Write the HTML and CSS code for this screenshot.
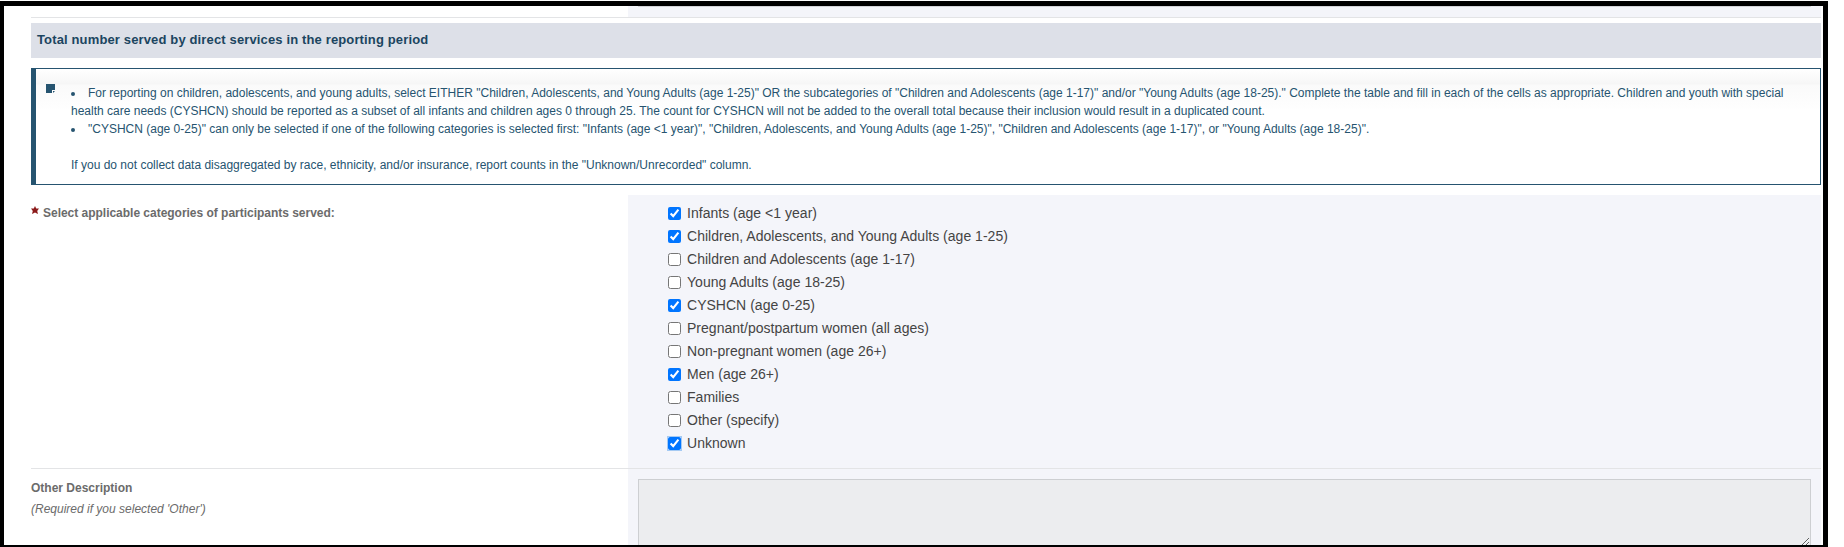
FILE: index.html
```html
<!DOCTYPE html>
<html lang="en">
<head>
<meta charset="utf-8">
<title>Direct Services</title>
<link rel="stylesheet" href="styles.css">
</head>
<body>
<main class="frame">
  <div class="row row-previous">
    <div class="label-cell"></div>
    <div class="field-cell"><div class="previous-field"></div></div>
  </div>
  <h2 class="section-title">Total number served by direct services in the reporting period</h2>
  <section class="note">
    <svg class="note-icon" width="9" height="9" viewBox="0 0 9 9"><path d="M0 0h9v6H6v3H0z" fill="#265470"/><path d="M7 7h2L7 9z" fill="#265470"/></svg>
    <div class="note-text">
      <p class="bullet">For reporting on children, adolescents, and young adults, select EITHER "Children, Adolescents, and Young Adults (age 1-25)" OR the subcategories of "Children and Adolescents (age 1-17)" and/or "Young Adults (age 18-25)." Complete the table and fill in each of the cells as appropriate. Children and youth with special</p>
      <p>health care needs (CYSHCN) should be reported as a subset of all infants and children ages 0 through 25. The count for CYSHCN will not be added to the overall total because their inclusion would result in a duplicated count.</p>
      <p class="bullet">"CYSHCN (age 0-25)" can only be selected if one of the following categories is selected first: "Infants (age &lt;1 year)", "Children, Adolescents, and Young Adults (age 1-25)", "Children and Adolescents (age 1-17)", or "Young Adults (age 18-25)".</p>
      <p class="last">If you do not collect data disaggregated by race, ethnicity, and/or insurance, report counts in the "Unknown/Unrecorded" column.</p>
    </div>
  </section>
  <div class="row row-categories">
    <div class="label-cell required">
      <svg class="star" width="8" height="8" viewBox="0 0 8 8"><path d="M4 0l1.2 2.6H8L6.2 4.9 7 8 4 6.6 1 8l.8-3.1L0 2.6h2.8z" fill="#8b1a1a"/></svg>
      <span>Select applicable categories of participants served:</span>
    </div>
    <div class="field-cell options">
      <label><input type="checkbox" checked>Infants (age &lt;1 year)</label>
      <label><input type="checkbox" checked>Children, Adolescents, and Young Adults (age 1-25)</label>
      <label><input type="checkbox">Children and Adolescents (age 1-17)</label>
      <label><input type="checkbox">Young Adults (age 18-25)</label>
      <label><input type="checkbox" checked>CYSHCN (age 0-25)</label>
      <label><input type="checkbox">Pregnant/postpartum women (all ages)</label>
      <label><input type="checkbox">Non-pregnant women (age 26+)</label>
      <label><input type="checkbox" checked>Men (age 26+)</label>
      <label><input type="checkbox">Families</label>
      <label><input type="checkbox">Other (specify)</label>
      <label><input class="focused" type="checkbox" checked>Unknown</label>
    </div>
  </div>
  <div class="row row-other">
    <div class="label-cell">
      <div class="other-title">Other Description</div>
      <div class="hint">(Required if you selected 'Other')</div>
    </div>
    <div class="field-cell other-field"><textarea disabled></textarea></div>
  </div>
</main>
</body>
</html>
```
FILE: styles.css
```css
* { box-sizing: border-box; }
html { height: 547px; overflow: hidden; }
body {
  margin: 0;
  padding-top: 1px;
  height: 547px;
  overflow: hidden;
  background: #fff;
  font-family: "Liberation Sans", Arial, sans-serif;
}
.frame {
  width: 1828px;
  height: 546px;
  border: 5px solid #000;
  border-left-width: 4px;
  border-bottom-width: 2px;
  padding: 0 2px 0 27px;
  overflow: hidden;
}
.row { display: grid; grid-template-columns: 597px 1193px; border-bottom: 1px solid #e3e4e6; }
.field-cell { background: #f4f5fa; }
.row-previous { height: 12px; }
.previous-field { width: 1173px; height: 1px; margin-left: 10px; background: #d3d4d8; }
.section-title {
  margin: 5px 0 10px;
  height: 35px;
  padding-left: 6px;
  background: #dde0e8;
  color: #1b4560;
  font-size: 13px;
  line-height: 33px;
  white-space: nowrap;
  letter-spacing: 0.14px;
}
.note {
  display: flex;
  height: 117px;
  border: 1px solid #265470;
  border-left-width: 5px;
  padding: 15px 0 0 10px;
  background: linear-gradient(#fff 0, #f6f6f6 15px, #fafafa 16px, #fefefe 38px, #fff 40px);
  color: #265470;
  font-size: 12px;
  line-height: 18px;
  white-space: nowrap;
}
.note-icon { flex: none; margin-right: 16px; }
.note p { margin: 0; }
.note .last { margin-top: 18px; }
.bullet { display: flex; align-items: center; }
.bullet::before { content: ""; width: 4px; height: 4px; border-radius: 50%; margin: 2px 13px 0 0; background: #265470; }
.row-categories { height: 274px; margin-top: 10px; }
.label-cell { color: #6b6b6b; font-size: 12px; font-weight: bold; }
.required { display: flex; gap: 4px; line-height: 16px; padding-top: 10px; letter-spacing: -0.02px; }
.star { margin-top: 1px; }
.options { padding: 7px 0 0 40px; display: flex; flex-direction: column; align-items: flex-start; }
.options label { display: flex; align-items: center; height: 23px; font-size: 14px; line-height: 23px; letter-spacing: 0.02px; color: #444; }
.options input { width: 13px; height: 13px; margin: 0 6px 0 0; }
.options .focused { outline: 1px solid #a5caf3; }
.row-other { height: 90px; border-bottom: 0; }
.other-title { line-height: 16px; padding-top: 11px; }
.hint { font-weight: normal; font-style: italic; line-height: 16px; margin-top: 5px; }
.other-field { padding: 10px 0 0 10px; }
textarea { display: block; width: 1173px; height: 68px; margin: 0; border: 1px solid #cdcfd2; background: #ecedef; border-radius: 0; resize: both; }
```
